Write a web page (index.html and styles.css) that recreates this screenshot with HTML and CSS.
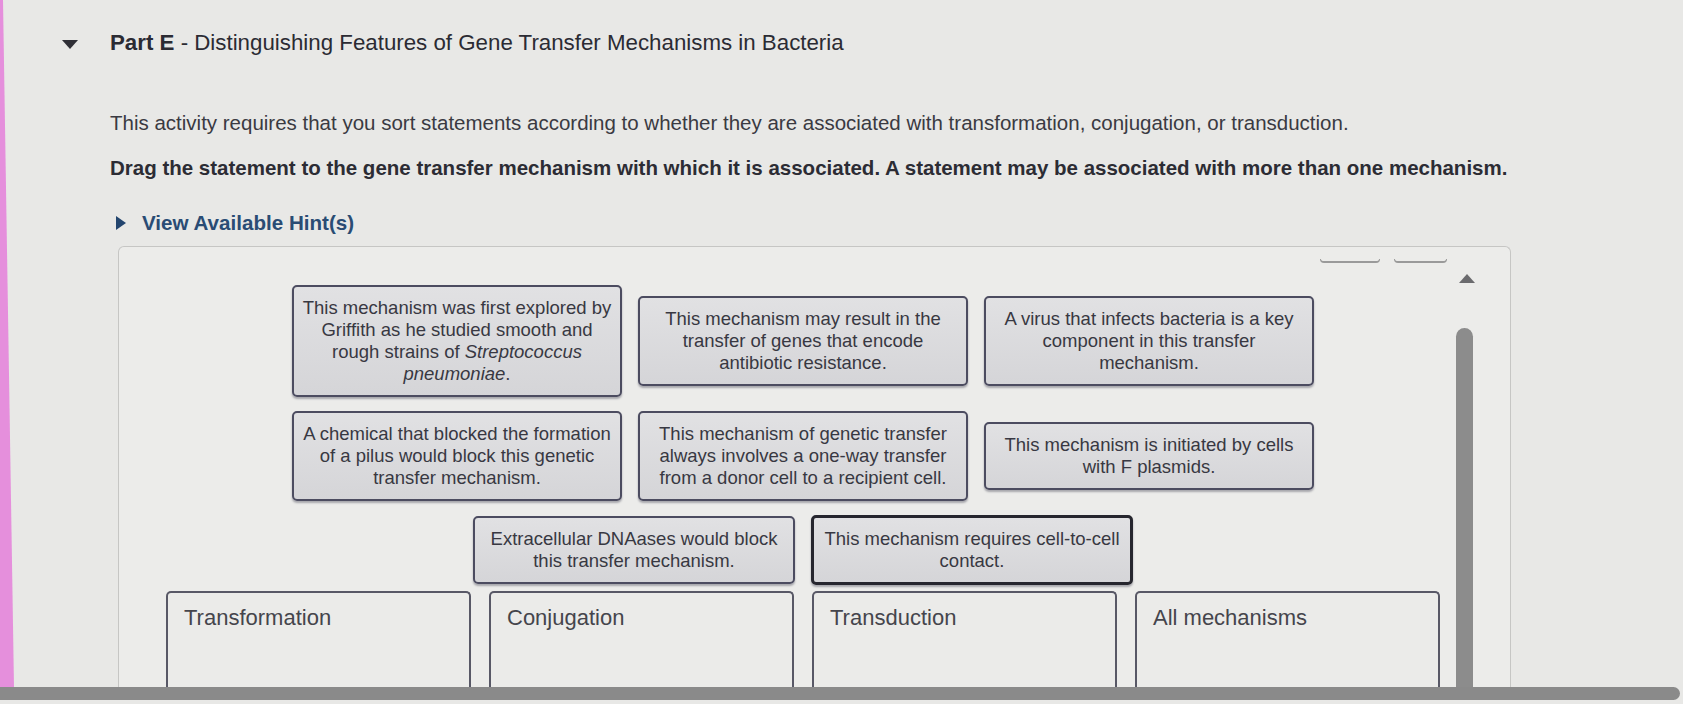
FILE: index.html
```html
<!DOCTYPE html>
<html lang="en">
<head>
<meta charset="utf-8">
<title>Part E - Distinguishing Features of Gene Transfer Mechanisms in Bacteria</title>
<link rel="stylesheet" href="styles.css">
</head>
<body>
<div class="screen">
  <div class="edge"></div>
  <div class="page">
    <div class="part-head">
      <svg class="caret-down" width="16" height="9" viewBox="0 0 16 9"><path d="M0 0 H16 L8 9 Z" fill="#2f2f36"/></svg>
      <h1 class="title"><b>Part E</b> - Distinguishing Features of Gene Transfer Mechanisms in Bacteria</h1>
    </div>
    <p class="intro">This activity requires that you sort statements according to whether they are associated with transformation, conjugation, or transduction.</p>
    <p class="instr">Drag the statement to the gene transfer mechanism with which it is associated. A statement may be associated with more than one mechanism.</p>
    <div class="hint">
      <svg class="caret-right" width="10" height="14" viewBox="0 0 10 14"><path d="M0 0 L10 7 L0 14 Z" fill="#23456e"/></svg>
      <span>View Available Hint(s)</span>
    </div>
    <div class="board">
      <div class="board-main">
        <div class="toolbar">
          <span class="mark mark-a"></span>
          <span class="mark mark-b"></span>
        </div>
        <div class="card-row row1">
          <div class="card">This mechanism was first explored by<br>Griffith as he studied smooth and<br>rough strains of <i>Streptococcus</i><br><i>pneumoniae</i>.</div>
          <div class="card">This mechanism may result in the<br>transfer of genes that encode<br>antibiotic resistance.</div>
          <div class="card">A virus that infects bacteria is a key<br>component in this transfer<br>mechanism.</div>
        </div>
        <div class="card-row row2">
          <div class="card">A chemical that blocked the formation<br>of a pilus would block this genetic<br>transfer mechanism.</div>
          <div class="card">This mechanism of genetic transfer<br>always involves a one-way transfer<br>from a donor cell to a recipient cell.</div>
          <div class="card">This mechanism is initiated by cells<br>with F plasmids.</div>
        </div>
        <div class="card-row row3">
          <div class="card card-sm">Extracellular DNAases would block<br>this transfer mechanism.</div>
          <div class="card card-sm card-active">This mechanism requires cell-to-cell<br>contact.</div>
        </div>
        <div class="bins">
          <div class="bin"><span class="bin-label">Transformation</span></div>
          <div class="bin"><span class="bin-label">Conjugation</span></div>
          <div class="bin"><span class="bin-label">Transduction</span></div>
          <div class="bin"><span class="bin-label">All mechanisms</span></div>
        </div>
      </div>
      <div class="vscroll">
        <svg class="up-arrow" width="16" height="9" viewBox="0 0 16 9"><path d="M8 0 L16 9 H0 Z" fill="#6b6b6e"/></svg>
        <div class="vthumb"></div>
      </div>
    </div>
  </div>
</div>
<div class="hscroll"></div>
</body>
</html>
```
FILE: styles.css
```css
html, body {
  margin: 0;
  padding: 0;
}
body {
  width: 1683px;
  height: 704px;
  overflow: hidden;
  display: flex;
  flex-direction: column;
  background: #e8e8e6;
  font-family: "Liberation Sans", Arial, Helvetica, sans-serif;
  color: #34343c;
}
.screen {
  flex: 1;
  display: flex;
  min-height: 0;
  overflow: hidden;
}
.edge {
  width: 14px;
  flex: none;
  background: #e58fdc;
  clip-path: polygon(0 0, 3px 0, 100% 100%, 0 100%);
}
.page {
  flex: 1;
  display: flex;
  flex-direction: column;
  padding: 30px 0 0 48px;
  min-width: 0;
}
.part-head {
  display: flex;
  align-items: center;
  gap: 32px;
  height: 26px;
}
.caret-down {
  flex: none;
  margin-top: 2px;
}
.title {
  margin: 0;
  font-size: 22.3px;
  line-height: 26px;
  font-weight: normal;
  color: #2b2b33;
}
.title b {
  font-weight: bold;
}
.intro {
  margin: 55px 0 0 48px;
  font-size: 20.5px;
  line-height: 24px;
  color: #3a3a42;
}
.instr {
  margin: 21px 0 0 48px;
  font-size: 20.5px;
  line-height: 24px;
  font-weight: bold;
  color: #2c2c34;
}
.hint {
  margin: 31px 0 0 54px;
  display: flex;
  align-items: center;
  gap: 16px;
  height: 24px;
  font-size: 20.6px;
  font-weight: bold;
  color: #2a4c74;
}
.board {
  margin: 11px 0 0 56px;
  width: 1393px;
  box-sizing: border-box;
  flex: 1;
  display: flex;
  background: #ececea;
  border: 1px solid #c6c6c4;
  border-bottom: 0;
  border-radius: 6px 6px 0 0;
}
.board-main {
  width: 1274px;
  padding: 0 15px 0 47px;
  display: flex;
  flex-direction: column;
}
.toolbar {
  display: flex;
  justify-content: flex-end;
  gap: 14px;
  padding-top: 12px;
  margin-right: -7px;
  height: 3px;
}
.mark {
  height: 2px;
  border: 1.5px solid #9a9a9a;
  border-top: 0;
  border-bottom-width: 2px;
  border-radius: 0 0 5px 5px;
}
.mark-a { width: 58px; }
.mark-b { width: 51px; }
.card-row {
  display: flex;
  justify-content: center;
  align-items: center;
  gap: 16px;
}
.row1 { margin-top: 23px; }
.row2 { margin-top: 14px; }
.row3 { margin-top: 14px; gap: 16px; }
.card {
  width: 330px;
  box-sizing: border-box;
  padding: 10px 4px;
  text-align: center;
  white-space: nowrap;
  font-size: 18.5px;
  line-height: 22px;
  color: #383842;
  background: linear-gradient(#e1e1e3, #d5d5d8);
  border: 2.5px solid #4c4c60;
  border-radius: 5px;
  box-shadow: 0 2px 2px rgba(40, 40, 60, 0.35);
}
.card-sm {
  width: 322px;
}
.card-active {
  border-color: #26262e;
  border-width: 3px;
}
.bins {
  display: flex;
  gap: 18px;
  margin-top: 6px;
  flex: 1;
}
.bin {
  width: 305px;
  height: 140px;
  box-sizing: border-box;
  border: 2px solid #585866;
  border-bottom: 0;
  border-radius: 5px 5px 0 0;
  padding: 12px 16px;
  background: #ebebe9;
}
.bin-label {
  font-size: 22px;
  line-height: 26px;
  color: #45454c;
}
.vscroll {
  width: 18px;
  display: flex;
  flex-direction: column;
  align-items: center;
  padding-top: 27px;
}
.up-arrow {
  flex: none;
  margin-left: 6px;
}
.vthumb {
  margin-top: 45px;
  width: 17px;
  flex: 1;
  background: #8c8c8c;
  border-radius: 9px 9px 0 0;
}
.hscroll {
  flex: none;
  height: 13px;
  width: 1680px;
  margin-bottom: 4px;
  background: #8a8a8a;
  border-radius: 0 7px 7px 0;
}
```
